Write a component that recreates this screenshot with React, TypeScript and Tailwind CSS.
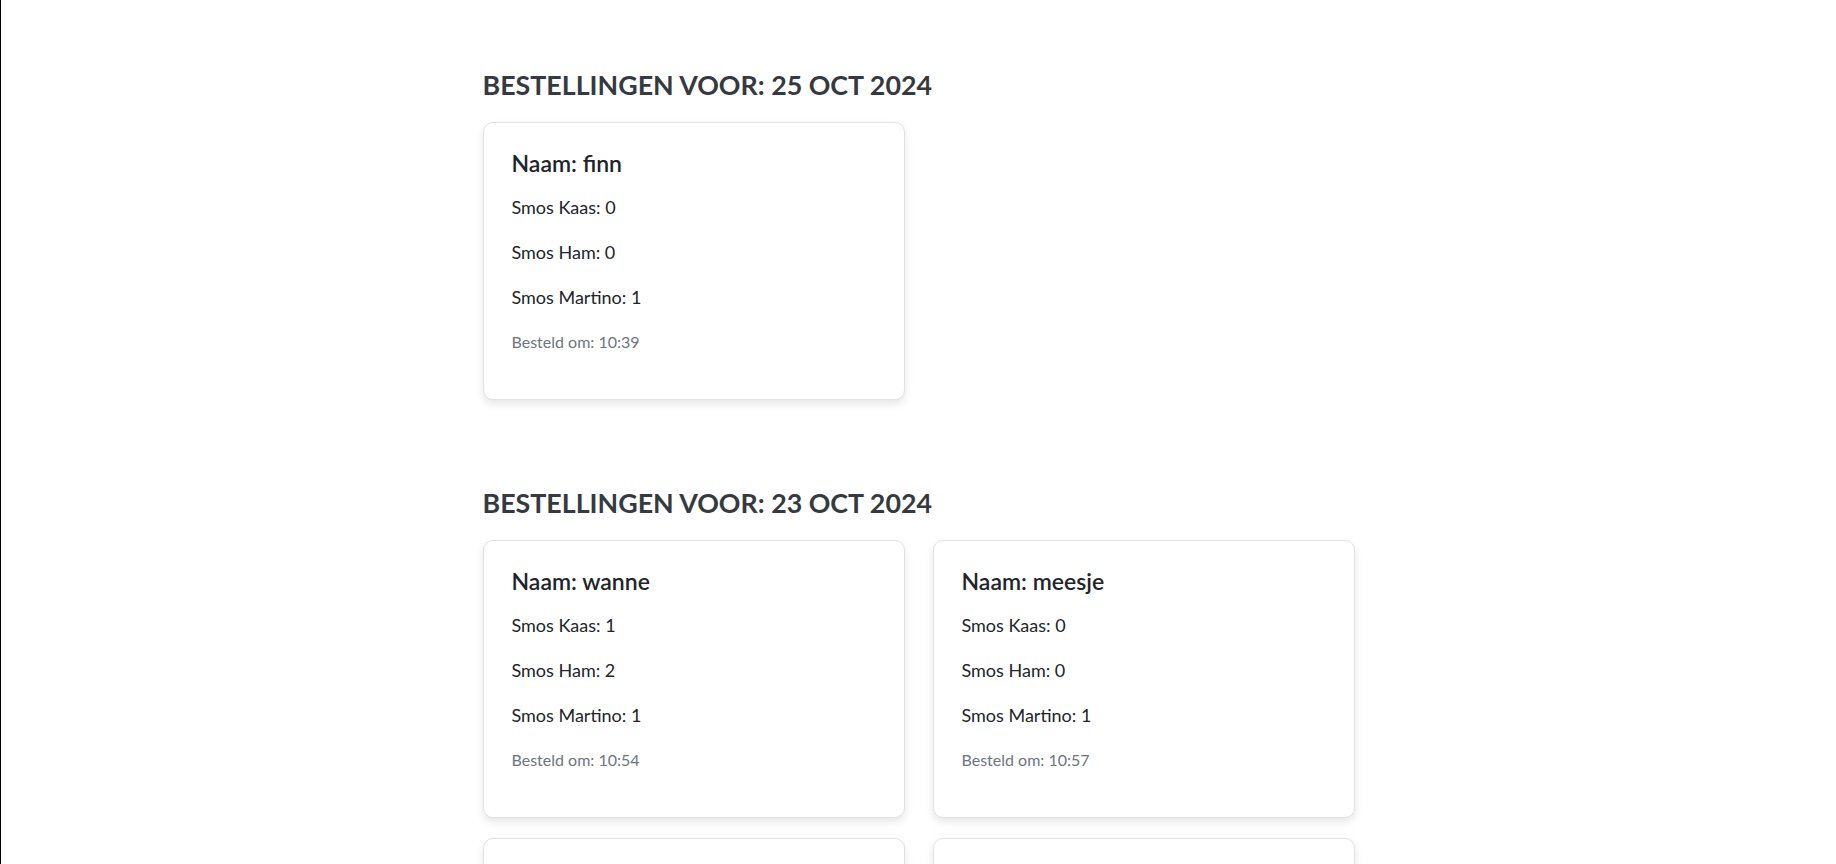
import React from 'react';

interface Order {
  naam: string;
  kaas: number;
  ham: number;
  martino: number;
  tijd: string;
}

interface Day {
  datum: string;
  orders: Order[];
}

const days: Day[] = [
  {
    datum: '25 Oct 2024',
    orders: [{ naam: 'finn', kaas: 0, ham: 0, martino: 1, tijd: '10:39' }],
  },
  {
    datum: '23 Oct 2024',
    orders: [
      { naam: 'wanne', kaas: 1, ham: 2, martino: 1, tijd: '10:54' },
      { naam: 'meesje', kaas: 0, ham: 0, martino: 1, tijd: '10:57' },
      { naam: 'lars', kaas: 1, ham: 0, martino: 0, tijd: '11:02' },
      { naam: 'jules', kaas: 0, ham: 1, martino: 0, tijd: '11:08' },
    ],
  },
];

function OrderCard({ order }: { order: Order }) {
  return (
    <div className="rounded-[10px] border border-[#dee2e6] bg-white p-[28px] shadow-[0_4px_8px_rgba(0,0,0,0.1)]">
      <h3 className="mb-[20px] text-[23px] font-semibold leading-[24px] text-[#212529]">
        Naam: {order.naam}
      </h3>
      <p className="mb-[19px] text-[18px] leading-[25px] text-[#212529]">Smos Kaas: {order.kaas}</p>
      <p className="mb-[19px] text-[18px] leading-[26px] text-[#212529]">Smos Ham: {order.ham}</p>
      <p className="mb-[20px] text-[18px] leading-[26px] text-[#212529]">
        Smos Martino: {order.martino}
      </p>
      <p className="mb-[18px] text-[16px] leading-[23px] text-[#6c757d]">Besteld om: {order.tijd}</p>
    </div>
  );
}

export default function App() {
  return (
    <div
      className="min-h-screen border-l border-black bg-white"
      style={{ fontFamily: '"Segoe UI", Lato, "Open Sans", sans-serif' }}
    >
      <div className="mx-auto w-[872px] pt-[68px]">
        {days.map((day) => (
          <section key={day.datum} className="mb-[86px]">
            <h2 className="mb-[20px] text-[26.8px] font-bold uppercase leading-[34px] text-[#343a40]">
              Bestellingen voor: {day.datum}
            </h2>
            <div className="grid grid-cols-2 gap-x-[28px] gap-y-[20px]">
              {day.orders.map((order) => (
                <OrderCard key={order.naam} order={order} />
              ))}
            </div>
          </section>
        ))}
      </div>
    </div>
  );
}
